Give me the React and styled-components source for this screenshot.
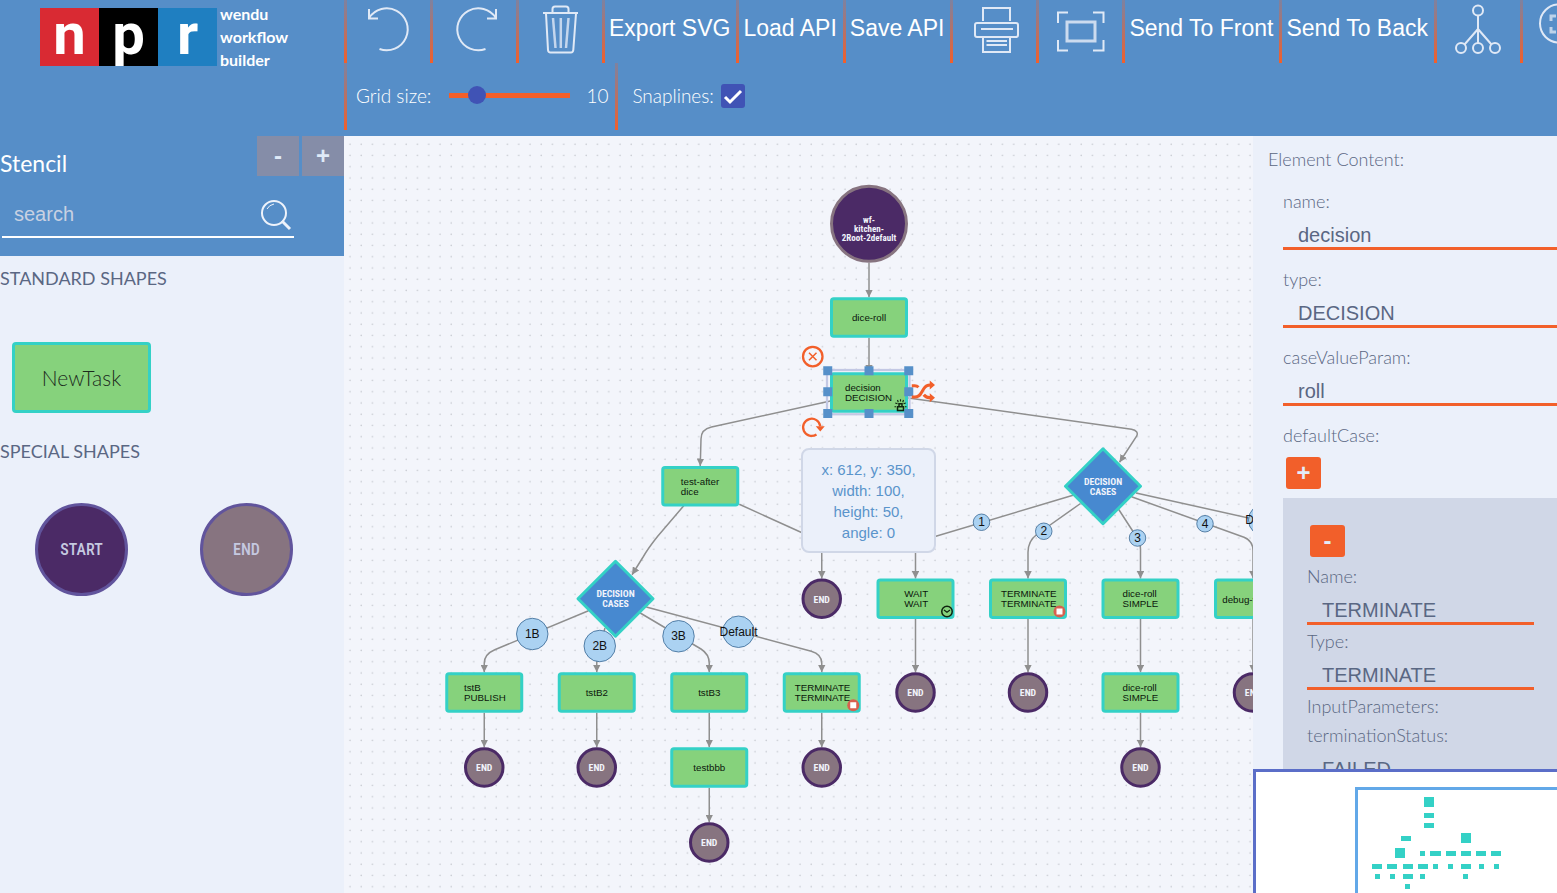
import React from "react";
import styled, { createGlobalStyle } from "styled-components";

const color = {
  blue: "#568ec8",
  panel: "#ebf0fa",
  group: "#d0d7e7",
  paper: "#f3f5fb",
  ink: "#5a6783",
  orange: "#f25f2a",
  teal: "#34d1c6",
  green: "#86d27c",
  purple: "#4b2a66",
  mauve: "#877480",
};
const sans = '"Liberation Sans", Arial, sans-serif';
const lato = 'Lato, "Open Sans", sans-serif';
const condensed = '"Roboto Condensed", "Liberation Sans Narrow", Roboto, sans-serif';

const GlobalStyle = createGlobalStyle`
  * { box-sizing: border-box; }
  html, body { margin: 0; height: 100%; }
  body { font-family: ${lato}; font-weight: 300; overflow: hidden; }
  button, input { font-family: ${sans}; border: 0; margin: 0; padding: 0; border-radius: 0; background: none; }
  input:focus, button:focus { outline: none; }
`;

const Page = styled.div`
  display: flex;
  flex-direction: column;
  height: 100vh;
  overflow: hidden;
`;

const Header = styled.header`
  display: flex;
  flex: none;
  height: 136px;
  background: ${color.blue};
`;

const Brand = styled.div`
  display: flex;
  flex: none;
  width: 344px;
  padding: 8px 0 0 40px;
`;

const LogoTile = styled.div`
  width: 59px;
  height: 58px;
  background: ${(p) => p.$bg};
  color: #fff;
  font: 700 58px/52px Roboto, sans-serif;
  text-align: center;
`;

const BrandName = styled.div`
  width: 80px;
  padding-left: 3px;
  margin-top: -6px;
  color: #fff;
  font: 700 16px/23px ${lato};
`;

const Toolbar = styled.div`
  flex: 1;
  min-width: 0;
  overflow: hidden;
`;

const ToolRow = styled.div`
  display: flex;
  height: ${(p) => p.$height}px;
`;

const divider = `
  background: linear-gradient(to bottom, rgba(241, 95, 43, 0.25), ${color.orange}) left top / 3px 100% no-repeat;
`;

const IconButton = styled.button`
  ${divider}
  display: flex;
  flex: none;
  justify-content: center;
  width: 86px;
  padding: 4px 0 0 2px;
  cursor: pointer;
  svg { overflow: visible; }
`;

const TextButton = styled.button`
  ${divider}
  flex: none;
  padding: 0 6px 6px 7px;
  color: #fff;
  font-size: 23px;
  white-space: nowrap;
  cursor: pointer;
`;

const ToolField = styled.div`
  ${divider}
  display: flex;
  flex: none;
  align-items: center;
  padding: 0 7px 2px ${(p) => p.$left}px;
  color: #fff;
  font-size: 19px;
`;

const Slider = styled.input`
  appearance: none;
  width: 121px;
  height: 18px;
  margin: 0 16px 0 18px;
  &::-webkit-slider-runnable-track {
    height: 5px;
    background: ${color.orange};
  }
  &::-webkit-slider-thumb {
    appearance: none;
    width: 18px;
    height: 18px;
    margin-top: -7px;
    border-radius: 50%;
    background: #4053b5;
  }
`;

const CheckWrap = styled.span`
  display: grid;
  margin-left: 7px;
  & > * { grid-area: 1 / 1; }
  svg { pointer-events: none; }
`;

const Checkbox = styled.input`
  appearance: none;
  width: 24px;
  height: 24px;
  border-radius: 3px;
  background: #4053b5;
`;

const Body = styled.div`
  display: flex;
  flex: 1;
  min-height: 0;
`;

const Stencil = styled.aside`
  flex: none;
  width: 344px;
  background: ${color.panel};
  overflow: hidden;
`;

const StencilHead = styled.div`
  height: 120px;
  background: ${color.blue};
`;

const StencilBar = styled.div`
  display: flex;
  height: 56px;
  gap: 3px;
`;

const StencilTitle = styled.h2`
  flex: 1;
  margin: 0;
  color: #fff;
  font: 400 23px/54px ${lato};
`;

const StencilToggle = styled.button`
  width: 42px;
  height: 40px;
  background: #858da8;
  color: #dfeaf8;
  font-size: 24px;
  font-weight: 700;
  line-height: 38px;
`;

const SearchBox = styled.label`
  display: flex;
  align-items: center;
  width: 292px;
  height: 46px;
  margin-left: 2px;
  border-bottom: 2px solid #fff;
`;

const SearchInput = styled.input`
  flex: 1;
  min-width: 0;
  padding-left: 12px;
  color: #fff;
  font-size: 20px;
  &::placeholder { color: #c8d1e2; opacity: 1; }
`;

const ShapeGroup = styled.section`
  height: 173px;
`;

const GroupTitle = styled.h3`
  height: 46px;
  margin: 0;
  color: ${color.ink};
  font: 400 18px/45px ${lato};
`;

const ShapeRow = styled.div`
  display: flex;
  gap: 72px;
  padding: ${(p) => p.$pad};
`;

const TaskShape = styled.div`
  width: 139px;
  height: 71px;
  border: 3px solid ${color.teal};
  border-radius: 4px;
  background: ${color.green};
  color: #1c2b1c;
  font: 300 21px/65px ${lato};
  text-align: center;
`;

const RoundShape = styled.div`
  width: 93px;
  height: 93px;
  border: 3px solid #61549c;
  border-radius: 50%;
  background: ${(p) => p.$bg};
  color: #c5c9e0;
  font: 500 16px/88px ${condensed};
  text-align: center;
`;

const Canvas = styled.main`
  position: relative;
  flex: 1;
  min-width: 0;
  background: ${color.paper};
  overflow: hidden;
`;

const Paper = styled.svg`
  display: block;
  width: 100%;
  height: 100%;
  .edge { fill: none; stroke: #8f8f8f; stroke-width: 2; }
  .task { fill: ${color.green}; stroke: ${color.teal}; stroke-width: 4; }
  .end { fill: ${color.mauve}; stroke: ${color.purple}; stroke-width: 4; }
  .root { fill: ${color.purple}; stroke: ${color.mauve}; stroke-width: 4; }
  .cases { fill: #4789d0; stroke: ${color.teal}; stroke-width: 4; stroke-linejoin: round; }
  .badge { fill: #abd2f2; stroke: #2f5f8c; }
  .taskText { font: 400 13px ${sans}; fill: #0c160c; }
  .nodeText { font: 700 13px ${condensed}; fill: #f1f3fb; text-anchor: middle; }
  .rootText { font: 700 12px ${condensed}; fill: #f1f3fb; text-anchor: middle; }
  .badgeText { font: 400 16px ${sans}; fill: #111; text-anchor: middle; }
`;

const Tooltip = styled.div`
  position: absolute;
  left: 457px;
  top: 312px;
  width: 135px;
  padding: 9px 14px 8px;
  border: 2px solid ${color.group};
  border-radius: 8px;
  background: ${color.panel};
  color: #5a94cb;
  font: 400 15px/21px ${sans};
  text-align: center;
`;

const Side = styled.aside`
  display: flex;
  flex-direction: column;
  flex: none;
  width: 304px;
  background: ${color.panel};
`;

const Inspector = styled.form`
  flex: 1;
  min-height: 0;
  padding-left: 15px;
  color: ${color.ink};
  font-size: 18px;
  overflow: hidden;
`;

const InspectorTitle = styled.div`
  line-height: 46px;
`;

const Fields = styled.div`
  display: flex;
  flex-direction: column;
  gap: 16px;
  padding: 6px 0 0 15px;
`;

const FieldBox = styled.div`
  display: flex;
  flex-direction: column;
`;

const FieldLabel = styled.label`
  line-height: 26px;
`;

const FieldInput = styled.input`
  width: 100%;
  height: 36px;
  padding: 9px 0 0 15px;
  border-bottom: 3px solid ${color.orange};
  color: ${color.ink};
  font-size: 20px;
`;

const CaseButton = styled.button`
  width: 35px;
  height: 32px;
  margin: ${(p) => p.$margin};
  border-radius: 3px;
  background: ${color.orange};
  color: #e3ecf8;
  font-size: 24px;
  font-weight: 700;
  line-height: 28px;
`;

const CaseGroup = styled.div`
  display: flex;
  flex-direction: column;
  gap: 3px;
  padding: 27px 23px 0 24px;
  background: ${color.group};
`;

const Navigator = styled.div`
  position: relative;
  flex: none;
  height: 124px;
  border: solid #5b6ec8;
  border-width: 3px 0 0 3px;
  background: #fff;
  overflow: hidden;
  svg { display: block; width: 100%; height: 100%; fill: ${color.teal}; }
`;

const NavFrame = styled.div`
  position: absolute;
  left: 99px;
  top: 15px;
  right: 0;
  bottom: 0;
  border: solid #62a8e8;
  border-width: 3px 0 0 3px;
`;

function ToolIcon({ children }) {
  return (
    <svg width="50" height="50" viewBox="0 0 50 50" fill="none" stroke="#e0e9f6" strokeWidth="2" aria-hidden="true">
      {children}
    </svg>
  );
}

const icons = {
  undo: <path d="M6 14A21 21 0 1 1 16.500 45M6 5V14.500H15" />,
  redo: <path d="M47 14A21 21 0 1 0 36.500 45M47 5V14.500H38" />,
  trash: (
    <>
      <path d="M17.500 8V5Q17.500 2.500 20 2.500H31Q33.500 2.500 33.500 5V8M8 9H43" />
      <path d="M11 9.500L13 46Q13.200 48.500 15.500 48.500H36Q38 48.500 38.300 46L41 9.500" />
      <path d="M18 14L20.500 44M25.800 14V44M33.500 14L31 44" strokeWidth="2.500" opacity=".8" />
    </>
  ),
  print: (
    <>
      <path d="M14 17V4H41V17" />
      <path d="M13 33H8Q6 33 6 31V21Q6 19 8 19H47Q49 19 49 21V31Q49 33 47 33H42M12 25H44" />
      <path d="M14 33H41V48H14ZM17.500 37H38M17.500 41H38" />
    </>
  ),
  fit: (
    <>
      <path d="M3 19V8.500H13M38 8.500H48.500V19M48.500 36V46.500H38M13 46.500H3V36" />
      <rect x="12" y="18" width="28" height="19" strokeWidth="3" opacity=".85" />
    </>
  ),
  tree: (
    <g strokeWidth="2">
      <circle cx="25" cy="6.500" r="5" />
      <circle cx="8" cy="44" r="5" />
      <circle cx="25" cy="44" r="5" />
      <circle cx="42" cy="44" r="5" />
      <path d="M25 11.500V39M25 25L11.500 40.500M25 25L38.500 40.500" />
    </g>
  ),
  zoomFit: (
    <>
      <circle cx="20" cy="19.500" r="19" />
      <path d="M12 17V12H17M12 23V28H17M23 12H28V17M23 28H28V23" strokeWidth="3" opacity=".75" />
      <path d="M33 33L46 46" />
    </>
  ),
};

const tools = [
  { icon: "undo", label: "Undo" },
  { icon: "redo", label: "Redo" },
  { icon: "trash", label: "Clear paper" },
  { text: "Export SVG" },
  { text: "Load API" },
  { text: "Save API" },
  { icon: "print", label: "Print" },
  { icon: "fit", label: "Fullscreen" },
  { text: "Send To Front" },
  { text: "Send To Back" },
  { icon: "tree", label: "Auto layout" },
  { icon: "zoomFit", label: "Zoom to fit" },
];

const edges = [
  "M662 202V248",
  "M662 302V348",
  "M612 386L452 421Q438 424 438 437L437 473",
  "M712 382L1012 424Q1022 426 1019 433L996 468",
  "M415 526L380 567Q368 582 361 594L346 618",
  "M489 524L586 568Q599 574 599 587V623",
  "M934 512L740 570Q724 575 724 588V623",
  "M944 523L886 564Q874 573 874 588V623",
  "M995 531L1019 568Q1024 575 1024 584V623",
  "M1012 514L1162 568Q1174 573 1174 586V623",
  "M1018 509L1320 576",
  "M288 666L163 718Q149 724 149 736V748",
  "M310 689L303 712L299 730V748",
  "M357 669L438 717Q449 724 449 736V748",
  "M365 661L585 720Q599 724 599 736V748",
  "M149 802V848",
  "M299 802V848",
  "M449 802V848",
  "M599 802V848",
  "M449 902V948",
  "M724 677V748",
  "M874 677V748",
  "M1024 677V748",
  "M1174 677V748",
  "M1024 802V848",
];

const tasks = [
  { x: 662, y: 275, lines: ["dice-roll"] },
  { x: 662, y: 375, lines: ["decision", "DECISION"], indent: 32, mark: "decision" },
  { x: 437, y: 500, lines: ["test-after", "dice"], indent: 26 },
  { x: 724, y: 650, lines: ["WAIT", "WAIT"], indent: 15, mark: "wait" },
  { x: 874, y: 650, lines: ["TERMINATE", "TERMINATE"], indent: 36, mark: "stop" },
  { x: 1024, y: 650, lines: ["dice-roll", "SIMPLE"], indent: 24 },
  { x: 1174, y: 650, lines: ["debug-task"], indent: 41 },
  { x: 149, y: 775, lines: ["tstB", "PUBLISH"], indent: 27 },
  { x: 299, y: 775, lines: ["tstB2"] },
  { x: 449, y: 775, lines: ["tstB3"] },
  { x: 599, y: 775, lines: ["TERMINATE", "TERMINATE"], indent: 36, mark: "stop" },
  { x: 1024, y: 775, lines: ["dice-roll", "SIMPLE"], indent: 24 },
  { x: 449, y: 875, lines: ["testbbb"] },
];

const ends = [
  [599, 650], [724, 775], [874, 775], [1174, 775],
  [149, 875], [299, 875], [599, 875], [1024, 875], [449, 975],
];

const badges = [
  [812, 548, 11, "1"],
  [895, 560, 11, "2"],
  [1020, 569, 11, "3"],
  [1110, 550, 11, "4"],
  [1189, 545, 21, "Default"],
  [213, 697, 21, "1B"],
  [303, 713, 21, "2B"],
  [408, 700, 21, "3B"],
  [488, 694, 21, "Default"],
];

const marks = {
  stop: (
    <>
      <circle r="8" fill="#d8604f" />
      <rect x="-4" y="-4" width="8" height="8" fill="#fff" />
    </>
  ),
  wait: (
    <g fill="none" stroke="#10240f" strokeWidth="2">
      <circle r="7" />
      <path d="M-4 -2L0 1L4 -2" strokeWidth="1.500" />
    </g>
  ),
  decision: (
    <g fill="none" stroke="#10240f" strokeWidth="1.500">
      <path d="M-4 7V2H4V7ZM-2 2V-2H2V2" strokeWidth="2" />
      <path d="M0 -8V-5M-4 -7L-3 -4M4 -7L3 -4M-7 -3L-4 -2M7 -3L4 -2M-8 2H-6M8 2H6" />
    </g>
  ),
};

function TaskNode({ x, y, lines, indent, mark }) {
  const first = lines.length > 1 ? y - 2 : y + 5;
  return (
    <g>
      <rect className="task" x={x - 50} y={y - 25} width="100" height="50" rx="3" />
      <text className="taskText" textAnchor={indent ? "start" : "middle"}>
        {lines.map((line, i) => (
          <tspan key={i} x={x - (indent || 0)} y={first + i * 13}>{line}</tspan>
        ))}
      </text>
      {mark && <g transform={`translate(${x + 42} ${y + 17})`}>{marks[mark]}</g>}
    </g>
  );
}

function CasesNode({ x, y }) {
  return (
    <g>
      <path className="cases" d={`M${x} ${y - 50}L${x + 50} ${y}L${x} ${y + 50}L${x - 50} ${y}Z`} />
      <text className="nodeText">
        <tspan x={x} y={y - 2}>DECISION</tspan>
        <tspan x={x} y={y + 11}>CASES</tspan>
      </text>
    </g>
  );
}

function Selection() {
  const handles = [[607, 346], [662, 346], [715, 346], [607, 374], [715, 374], [607, 403], [662, 403], [715, 403]];
  return (
    <g>
      <rect x="606" y="345" width="110" height="59" fill="none" stroke="#c3c8e4" strokeWidth="3" />
      {handles.map(([x, y]) => (
        <rect key={`${x}-${y}`} x={x - 6} y={y - 6} width="12" height="12" fill="#5690c9" />
      ))}
      <g fill="none" stroke={color.orange} strokeWidth="3">
        <circle cx="587" cy="327" r="13" />
        <path d="M582 322L592 332M592 322L582 332" strokeWidth="2" />
        <path d="M592 431A11.500 11.500 0 1 1 597 420" />
        <path d="M719 366H723Q726 366 728 368M719 381H723Q729 381 732 375L735 370Q738 365 744 365M735 378Q738 382 744 382" strokeWidth="4" />
      </g>
      <path d="M591 420H603L597 427ZM743 359L750 365L743 371ZM743 376L750 382L743 388Z" fill={color.orange} />
    </g>
  );
}

function Diagram() {
  return (
    <Paper role="img" aria-label="Workflow diagram">
      <defs>
        <pattern id="dots" width="15" height="15" patternUnits="userSpaceOnUse" x="6" y="6">
          <circle cx="9" cy="8" r="1" fill="#c6c9d0" />
        </pattern>
        <marker id="arrow" markerUnits="userSpaceOnUse" markerWidth="10" markerHeight="10" refX="10" refY="5" orient="auto">
          <path d="M0 0L10 5L0 10Z" fill="#8f8f8f" />
        </marker>
      </defs>
      <g transform="scale(0.75) translate(38 -33)">
        <rect x="-38" y="33" width="4000" height="3000" fill="url(#dots)" />
        {edges.map((d) => (
          <path key={d} className="edge" d={d} markerEnd="url(#arrow)" />
        ))}
        <circle className="root" cx="662" cy="150" r="50" />
        <text className="rootText">
          <tspan x="662" y="149">wf-</tspan>
          <tspan x="662" y="161">kitchen-</tspan>
          <tspan x="662" y="173">2Root-2default</tspan>
        </text>
        {tasks.map((t) => <TaskNode key={`${t.x}-${t.y}`} {...t} />)}
        {ends.map(([x, y]) => (
          <g key={`${x}-${y}`}>
            <circle className="end" cx={x} cy={y} r="25" />
            <text className="nodeText" x={x} y={y + 5}>END</text>
          </g>
        ))}
        <CasesNode x={974} y={500} />
        <CasesNode x={324} y={650} />
        {badges.map(([x, y, r, text]) => (
          <g key={`${x}-${y}`}>
            <circle className="badge" cx={x} cy={y} r={r} />
            <text className="badgeText" x={x} y={y + 5}>{text}</text>
          </g>
        ))}
        <Selection />
      </g>
    </Paper>
  );
}

const navBlocks = [
  [168, 25, 10, 10], [168, 41, 10, 5], [168, 51, 10, 5], [145, 64, 10, 5], [205, 61, 10, 10], [139, 76, 10, 10],
  [164, 79, 5, 5], [174, 79, 11, 5], [190, 79, 10, 5], [205, 79, 10, 5], [220, 79, 10, 5], [235, 79, 10, 5],
  [116, 92, 10, 5], [131, 92, 10, 5], [147, 92, 10, 5], [162, 92, 10, 5], [177, 92, 5, 5], [192, 92, 5, 5],
  [205, 92, 10, 5], [223, 92, 5, 5], [238, 92, 5, 5],
  [119, 102, 5, 5], [134, 102, 5, 5], [147, 102, 10, 5], [164, 102, 5, 5], [207, 102, 5, 5], [149, 112, 5, 5],
];

function Field({ id, label, value }) {
  return (
    <FieldBox>
      <FieldLabel htmlFor={id}>{label}</FieldLabel>
      <FieldInput id={id} type="text" defaultValue={value} />
    </FieldBox>
  );
}

export default function App() {
  return (
    <Page>
      <GlobalStyle />
      <Header>
        <Brand>
          <LogoTile $bg="#d92a33">n</LogoTile>
          <LogoTile $bg="#000">p</LogoTile>
          <LogoTile $bg="#1f7fc1">r</LogoTile>
          <BrandName>wendu workflow builder</BrandName>
        </Brand>
        <Toolbar role="toolbar">
          <ToolRow $height={63}>
            {tools.map((t) =>
              t.icon ? (
                <IconButton key={t.icon} type="button" aria-label={t.label}>
                  <ToolIcon>{icons[t.icon]}</ToolIcon>
                </IconButton>
              ) : (
                <TextButton key={t.text} type="button">{t.text}</TextButton>
              )
            )}
          </ToolRow>
          <ToolRow $height={67}>
            <ToolField $left={12}>
              <label htmlFor="grid-size">Grid size:</label>
              <Slider id="grid-size" type="range" min="1" max="50" defaultValue="10" />
              <output htmlFor="grid-size">10</output>
            </ToolField>
            <ToolField $left={17}>
              <label htmlFor="snaplines">Snaplines:</label>
              <CheckWrap>
                <Checkbox id="snaplines" type="checkbox" defaultChecked />
                <svg width="24" height="24" fill="none" stroke="#fff" strokeWidth="3" aria-hidden="true">
                  <path d="M4 13L9 18L20 7" />
                </svg>
              </CheckWrap>
            </ToolField>
          </ToolRow>
        </Toolbar>
      </Header>
      <Body>
        <Stencil>
          <StencilHead>
            <StencilBar>
              <StencilTitle>Stencil</StencilTitle>
              <StencilToggle type="button">-</StencilToggle>
              <StencilToggle type="button">+</StencilToggle>
            </StencilBar>
            <SearchBox>
              <SearchInput type="text" placeholder="search" aria-label="search" />
              <svg width="34" height="34" fill="none" stroke="#eef3fb" strokeWidth="2" aria-hidden="true">
                <circle cx="14" cy="16" r="12" />
                <path d="M7 12Q9 8 14 7" strokeWidth="1" />
                <path d="M22 24L30 32" strokeWidth="3" />
              </svg>
            </SearchBox>
          </StencilHead>
          <ShapeGroup>
            <GroupTitle>STANDARD SHAPES</GroupTitle>
            <ShapeRow $pad="40px 12px">
              <TaskShape>NewTask</TaskShape>
            </ShapeRow>
          </ShapeGroup>
          <ShapeGroup>
            <GroupTitle>SPECIAL SHAPES</GroupTitle>
            <ShapeRow $pad="28px 35px">
              <RoundShape $bg={color.purple}>START</RoundShape>
              <RoundShape $bg={color.mauve}>END</RoundShape>
            </ShapeRow>
          </ShapeGroup>
        </Stencil>
        <Canvas>
          <Diagram />
          <Tooltip>x: 612, y: 350, width: 100, height: 50, angle: 0</Tooltip>
        </Canvas>
        <Side>
          <Inspector>
            <InspectorTitle>Element Content:</InspectorTitle>
            <Fields>
              <Field id="name" label="name:" value="decision" />
              <Field id="type" label="type:" value="DECISION" />
              <Field id="case-value" label="caseValueParam:" value="roll" />
              <FieldBox>
                <FieldLabel as="div">defaultCase:</FieldLabel>
                <CaseButton type="button" $margin="9px 0 9px 3px">+</CaseButton>
                <CaseGroup>
                  <CaseButton type="button" $margin="0 0 3px 3px">-</CaseButton>
                  <Field id="case-name" label="Name:" value="TERMINATE" />
                  <Field id="case-type" label="Type:" value="TERMINATE" />
                  <FieldLabel as="div">InputParameters:</FieldLabel>
                  <Field id="case-status" label="terminationStatus:" value="FAILED" />
                </CaseGroup>
              </FieldBox>
            </Fields>
          </Inspector>
          <Navigator>
            <svg aria-hidden="true">
              {navBlocks.map(([x, y, w, h]) => (
                <rect key={`${x}-${y}`} x={x} y={y} width={w} height={h} />
              ))}
            </svg>
            <NavFrame />
          </Navigator>
        </Side>
      </Body>
    </Page>
  );
}
